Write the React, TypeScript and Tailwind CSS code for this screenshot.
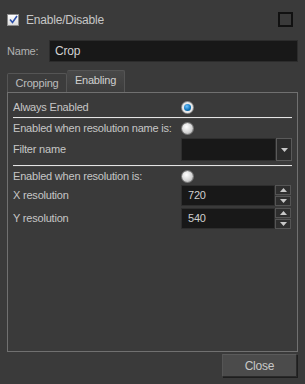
import React from 'react';

function Radio({ checked }: { checked?: boolean }) {
  if (checked) {
    return (
      <span className="flex h-[11px] w-[11px] items-center justify-center rounded-full bg-[#e8e8e8] shadow-[0_0_0_1px_#8a8a8a]">
        <span className="h-[7px] w-[7px] rounded-full bg-[radial-gradient(circle_at_40%_35%,#6ec3ff,#0b6fb5_60%,#064f86)]" />
      </span>
    );
  }
  return (
    <span className="h-[11px] w-[11px] rounded-full bg-[radial-gradient(circle_at_40%_35%,#ffffff,#d6d6d6_55%,#9a9a9a)] shadow-[0_0_0_1px_#7a7a7a]" />
  );
}

function Arrow({ up }: { up?: boolean }) {
  return (
    <svg width="7" height="4" viewBox="0 0 7 4">
      <path d={up ? 'M0 4 L3.5 0 L7 4 Z' : 'M0 0 L3.5 4 L7 0 Z'} fill="#c8c8c8" />
    </svg>
  );
}

function Spin({ value }: { value: string }) {
  return (
    <div className="flex h-[21px] w-[110px]">
      <div className="flex flex-1 items-center border border-[#2e2e2e] bg-[#181818] pl-[6px] text-[#cfcfcf]">
        {value}
      </div>
      <div className="flex w-[16px] flex-col">
        <div className="flex h-[10px] items-center justify-center border border-[#555] bg-[#2e2e2e]">
          <Arrow up />
        </div>
        <div className="mt-px flex h-[10px] items-center justify-center border border-[#555] bg-[#2e2e2e]">
          <Arrow />
        </div>
      </div>
    </div>
  );
}

export default function App() {
  return (
    <div className="flex h-[384px] w-[305px] flex-col bg-[#3a3a3a] font-['Liberation_Sans',Arial,sans-serif] text-[11px] tracking-[-0.2px] text-[#c6c6c6]">
      {/* enable row */}
      <div className="mt-[12px] flex h-[15px] items-center justify-between pl-[7px] pr-[12px]">
        <div className="flex items-center gap-[7px]">
          <span className="flex h-[12px] w-[12px] items-center justify-center border border-[#8c8c8c] bg-[linear-gradient(#ffffff,#dcdcdc)]">
            <svg width="9" height="9" viewBox="0 0 9 9">
              <path d="M1 4.5 L3.5 7.5 L8 1" stroke="#2c4fa8" strokeWidth="1.6" fill="none" />
            </svg>
          </span>
          <span className="text-[12px]">Enable/Disable</span>
        </div>
        <span className="h-[15px] w-[15px] border-2 border-[#111]" />
      </div>

      {/* name row */}
      <div className="mt-[13px] flex h-[22px] items-center pl-[7px] pr-[7px]">
        <span className="w-[42px] text-[#b2b2b2]">Name:</span>
        <div className="flex h-full flex-1 items-center border border-[#2c2c2c] bg-[#181818] pl-[5px] text-[12px] text-[#d2d2d2]">
          Crop
        </div>
      </div>

      {/* tabs */}
      <div className="mt-[8px] flex h-[22px] items-end pl-[7px]">
        <div className="flex h-[19px] w-[60px] items-center justify-center rounded-t-[2px] border border-b-0 border-[#555] bg-[#3c3c3c] text-[#bcbcbc]">
          Cropping
        </div>
        <div className="flex h-[22px] w-[58px] items-center justify-center rounded-t-[2px] border border-b-0 border-l-0 border-[#555] bg-[linear-gradient(#484848,#3d3d3d)] pb-[2px] text-[#d0d0d0]">
          Enabling
        </div>
      </div>

      {/* panel */}
      <div className="mx-[7px] flex h-[260px] flex-col border border-[#707070] px-[5px] pt-[4px]">
        <div className="flex h-[20px] items-center">
          <span className="w-[169px]">Always Enabled</span>
          <Radio checked />
        </div>
        <div className="h-[2px] border-t border-[#e4e4e4] bg-[#444]" />
        <div className="flex h-[19px] items-center">
          <span className="w-[169px]">Enabled when resolution name is:</span>
          <Radio />
        </div>
        <div className="flex h-[23px] items-center">
          <span className="w-[168px]">Filter name</span>
          <div className="flex h-full w-[111px]">
            <div className="flex-1 border border-[#2e2e2e] bg-[#181818]" />
            <div className="flex w-[16px] items-center justify-center border border-[#5a5a5a] bg-[#2c2c2c]">
              <Arrow />
            </div>
          </div>
        </div>
        <div className="mt-[4px] h-[2px] border-t border-[#e4e4e4] bg-[#444]" />
        <div className="flex h-[18px] items-center">
          <span className="w-[169px]">Enabled when resolution is:</span>
          <Radio />
        </div>
        <div className="flex h-[21px] items-center">
          <span className="w-[168px]">X resolution</span>
          <Spin value="720" />
        </div>
        <div className="mt-[2px] flex h-[21px] items-center">
          <span className="w-[168px]">Y resolution</span>
          <Spin value="540" />
        </div>
      </div>

      {/* footer */}
      <div className="mt-[2px] flex justify-end pr-[8px]">
        <button className="h-[23px] w-[75px] border border-[#2a2a2a] border-l-[#555] border-t-[#5a5a5a] bg-[#4b4b4b] text-[12px] text-[#c8c8c8] shadow-[1px_1px_0_#1e1e1e]">
          Close
        </button>
      </div>
    </div>
  );
}
